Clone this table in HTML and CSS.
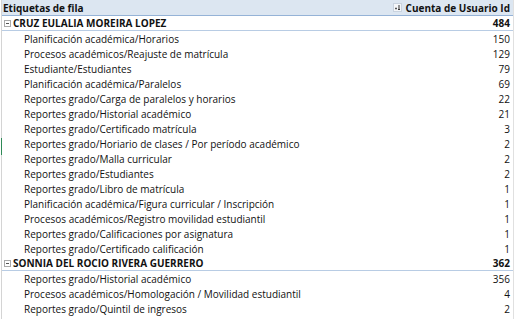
FILE: index.html
```html
<!DOCTYPE html>
<html lang="es">
<head>
<meta charset="utf-8">
<link rel="stylesheet" href="styles.css">
</head>
<body>
<div class="sheet">
  <div class="edge"><span class="sel"></span></div>
  <div class="pivot">
    <div class="row head">
      <div class="lbl">Etiquetas de fila</div>
      <div class="val"><span class="sort"><svg width="9" height="9" viewBox="0 0 9 9"><rect x="0.5" y="0.5" width="8" height="8" fill="#f4f6f9" stroke="#c9d3df"/><path d="M2 5.5h2M3 4.5v2" stroke="#555" stroke-width="1"/><path d="M6 2v5M5 6l1 1 1-1" stroke="#333" stroke-width="1" fill="none"/></svg></span>Cuenta de Usuario Id</div>
    </div>
    <div class="row grp">
      <div class="lbl"><span class="box"></span>CRUZ EULALIA MOREIRA LOPEZ</div>
      <div class="val">484</div>
    </div>
    <div class="row item"><div class="lbl">Planificación académica/Horarios</div><div class="val">150</div></div>
    <div class="row item"><div class="lbl">Procesos académicos/Reajuste de matrícula</div><div class="val">129</div></div>
    <div class="row item"><div class="lbl">Estudiante/Estudiantes</div><div class="val">79</div></div>
    <div class="row item"><div class="lbl">Planificación académica/Paralelos</div><div class="val">69</div></div>
    <div class="row item"><div class="lbl">Reportes grado/Carga de paralelos y horarios</div><div class="val">22</div></div>
    <div class="row item"><div class="lbl">Reportes grado/Historial académico</div><div class="val">21</div></div>
    <div class="row item"><div class="lbl">Reportes grado/Certificado matrícula</div><div class="val">3</div></div>
    <div class="row item"><div class="lbl">Reportes grado/Horiario de clases / Por período académico</div><div class="val">2</div></div>
    <div class="row item"><div class="lbl">Reportes grado/Malla curricular</div><div class="val">2</div></div>
    <div class="row item"><div class="lbl">Reportes grado/Estudiantes</div><div class="val">2</div></div>
    <div class="row item"><div class="lbl">Reportes grado/Libro de matrícula</div><div class="val">1</div></div>
    <div class="row item"><div class="lbl">Planificación académica/Figura curricular / Inscripción</div><div class="val">1</div></div>
    <div class="row item"><div class="lbl">Procesos académicos/Registro movilidad estudiantil</div><div class="val">1</div></div>
    <div class="row item"><div class="lbl">Reportes grado/Calificaciones por asignatura</div><div class="val">1</div></div>
    <div class="row item"><div class="lbl">Reportes grado/Certificado calificación</div><div class="val">1</div></div>
    <div class="row grp">
      <div class="lbl"><span class="box"></span>SONNIA DEL ROCIO RIVERA GUERRERO</div>
      <div class="val">362</div>
    </div>
    <div class="row item"><div class="lbl">Reportes grado/Historial académico</div><div class="val">356</div></div>
    <div class="row item"><div class="lbl">Procesos académicos/Homologación / Movilidad estudiantil</div><div class="val">4</div></div>
    <div class="row item"><div class="lbl">Reportes grado/Quintil de ingresos</div><div class="val">2</div></div>
    <div class="row grp last">
      <div class="lbl"><span class="box"></span></div>
      <div class="val"></div>
    </div>
  </div>
  <div class="redge"></div>
</div>
</body>
</html>
```
FILE: styles.css
```css
html, body {
  margin: 0;
  padding: 0;
  background: #fff;
  overflow: hidden;
}
body {
  width: 517px;
  height: 319px;
  font-family: "Open Sans", "Liberation Sans", sans-serif;
  font-size: 10px;
  color: #111;
}
.sheet {
  display: flex;
  height: 319px;
}
.edge {
  width: 1px;
  margin-left: 1px;
  background: #d4d4d4;
  position: relative;
}
.sel {
  position: absolute;
  left: 0;
  top: 138px;
  width: 1px;
  height: 17px;
  background: #2f8a57;
}
.pivot {
  flex: 1;
  display: flex;
  flex-direction: column;
}
.redge {
  width: 1px;
  margin-right: 3px;
  background: #e0e0e0;
}
.row {
  display: flex;
  height: 15px;
  align-items: center;
  white-space: nowrap;
  flex: none;
}
.lbl {
  flex: 1;
  overflow: visible;
  display: flex;
  align-items: center;
}
.val {
  width: 120px;
  text-align: right;
  padding-right: 3px;
  display: flex;
  justify-content: flex-end;
  align-items: center;
}
.head {
  background: #dce6f1;
  border-bottom: 1px solid #95b3d7;
  height: 15px;
  font-weight: 700;
}
.head .lbl { padding-left: 1px; }
.sort {
  display: inline-flex;
  margin-right: 4px;
}
.grp {
  font-weight: 700;
  border-bottom: 1px solid #b8cce4;
  height: 14px;
}
.grp .lbl { padding-left: 2px; }
.box {
  width: 7px;
  height: 7px;
  border: 1px solid #a9a9a9;
  box-sizing: border-box;
  margin-right: 2px;
  position: relative;
  flex: none;
}
.box::after {
  content: "";
  position: absolute;
  left: 1px;
  top: 2px;
  width: 3px;
  height: 1px;
  background: #555;
}
.item .lbl { padding-left: 22px; }
.last { border-bottom: none; border-top: 0; }
```
